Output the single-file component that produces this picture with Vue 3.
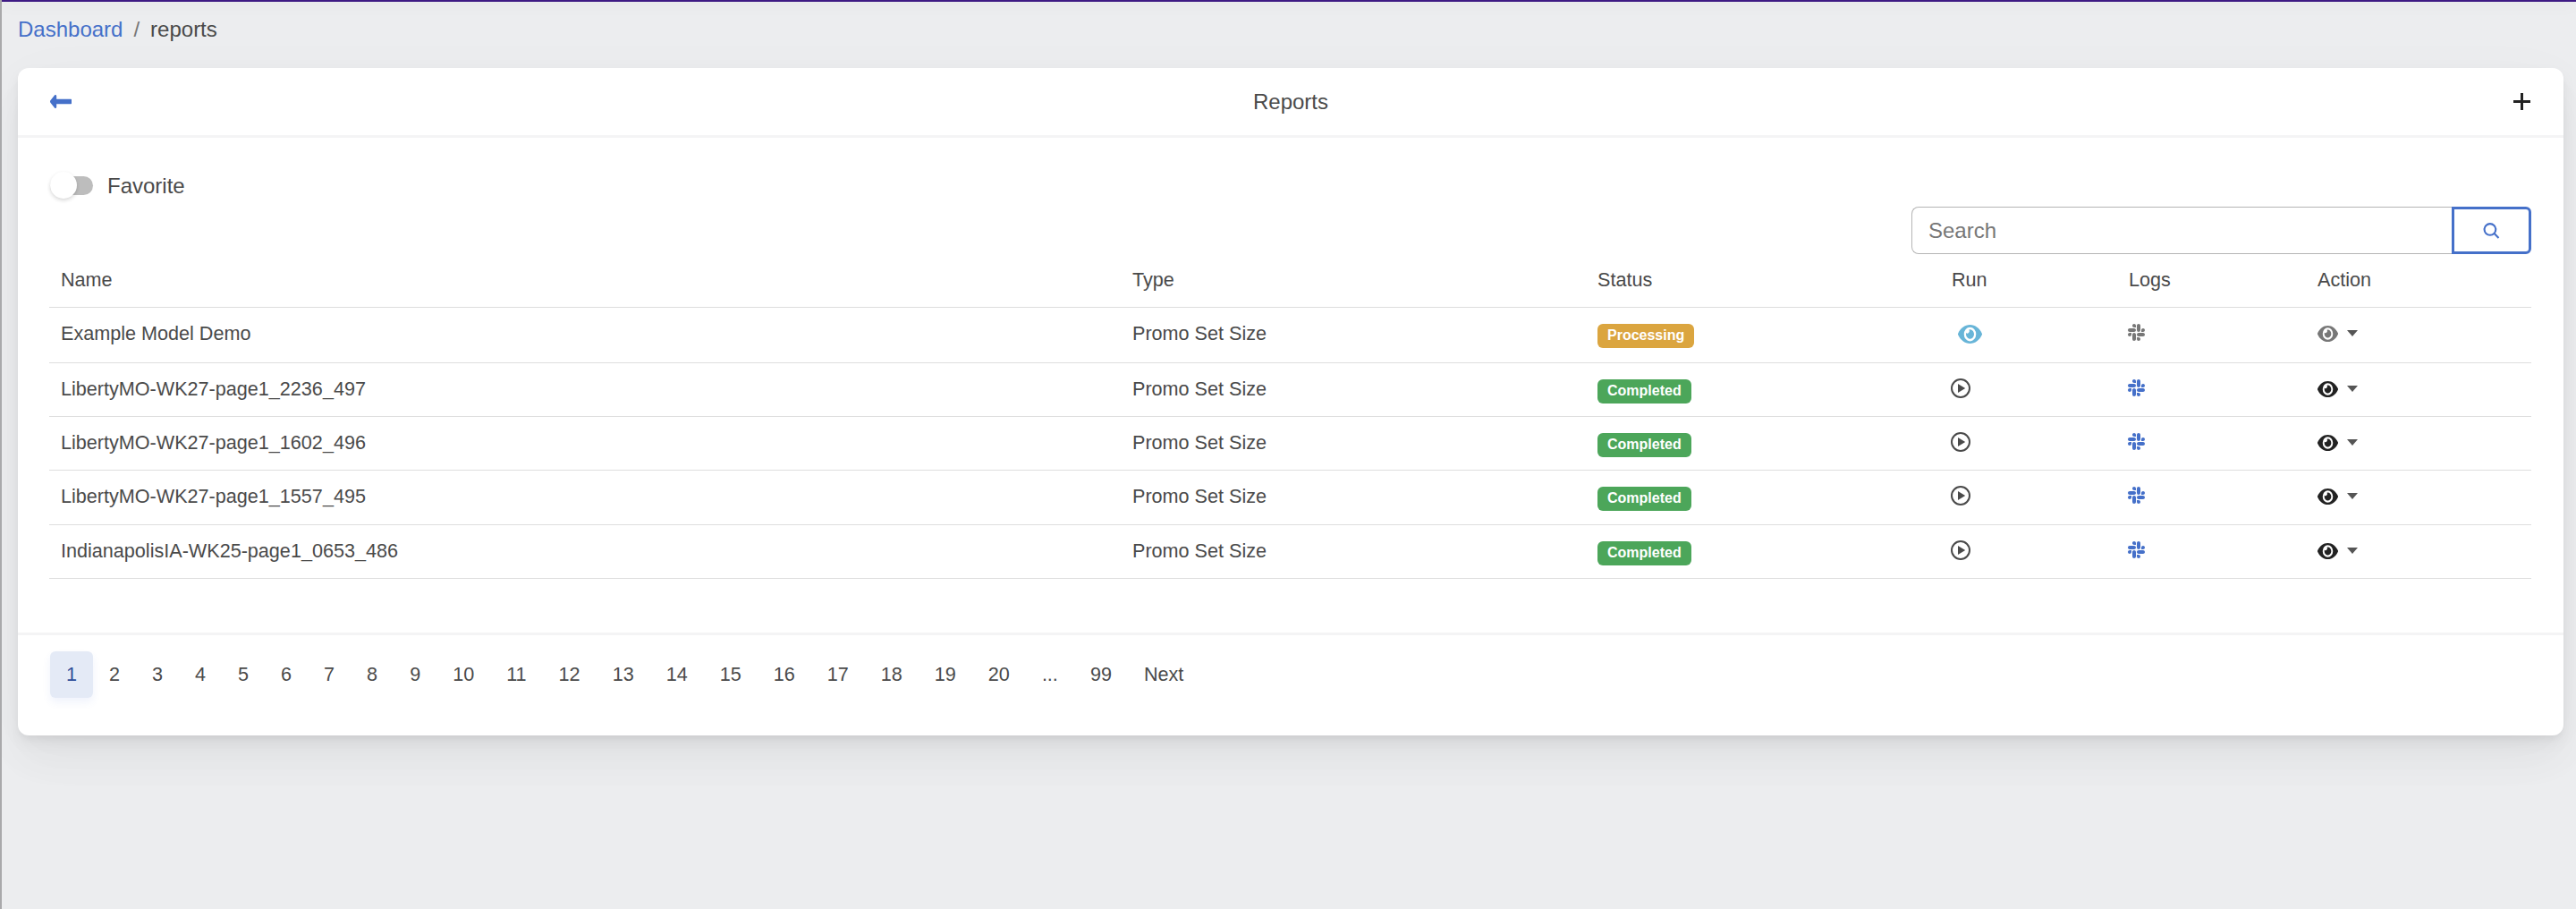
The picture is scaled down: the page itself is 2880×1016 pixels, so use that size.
<template>
  <div class="page">
    <div class="topbar"></div>

    <nav class="breadcrumb">
      <a class="crumb-link">Dashboard</a>
      <span class="crumb-sep">/</span>
      <span class="crumb-current">reports</span>
    </nav>

    <section class="card">
      <header class="card-header">
        <svg class="back-icon" viewBox="0 147 448 218" preserveAspectRatio="none">
          <path d="M134.059 296H436c6.627 0 12-5.373 12-12v-56c0-6.627-5.373-12-12-12H134.059v-46.059c0-21.382-25.851-32.09-40.971-16.971L7.029 239.029c-9.373 9.373-9.373 24.569 0 33.941l86.059 86.059c15.119 15.119 40.971 4.411 40.971-16.971V296z" />
        </svg>
        <h1 class="card-title">Reports</h1>
        <svg class="plus-icon" viewBox="0 0 19 19">
          <path d="M9.5 0v19M0 9.5h19" />
        </svg>
      </header>

      <div class="card-body">
        <div class="favorite">
          <span class="switch"><span class="knob"></span></span>
          <span class="favorite-label">Favorite</span>
        </div>

        <div class="search-row">
          <div class="search">
            <input class="search-input" type="text" placeholder="Search" />
            <button class="search-btn" type="button">
              <svg viewBox="0 0 18 17">
                <ellipse cx="7.5" cy="7" rx="6" ry="6" />
                <path d="M11.8 11.2 16.6 16" />
              </svg>
            </button>
          </div>
        </div>

        <table class="reports">
          <colgroup>
            <col style="width: 1198px" />
            <col style="width: 520px" />
            <col style="width: 396px" />
            <col style="width: 198px" />
            <col style="width: 211px" />
            <col style="width: 252px" />
          </colgroup>
          <thead>
            <tr>
              <th>Name</th>
              <th>Type</th>
              <th>Status</th>
              <th>Run</th>
              <th>Logs</th>
              <th>Action</th>
            </tr>
          </thead>
          <tbody>
            <tr v-for="row in rows" :key="row.name">
              <td>{{ row.name }}</td>
              <td>Promo Set Size</td>
              <td class="cell-status">
                <span class="badge" :class="row.processing ? 'badge-warn' : 'badge-ok'">{{ row.status }}</span>
              </td>
              <td class="cell-run">
                <svg v-if="row.processing" class="eye eye-run" viewBox="0 64 576 384" preserveAspectRatio="none">
                  <path :d="eyePath" />
                </svg>
                <svg v-else class="play" viewBox="0 0 22 22">
                  <circle cx="11" cy="11" r="10" />
                  <path d="M8 6l8.2 5L8 16z" />
                </svg>
              </td>
              <td class="cell-logs">
                <svg class="slack" :class="{ muted: row.processing }" viewBox="0 0 16 16">
                  <path :d="slackPath" />
                </svg>
              </td>
              <td>
                <div class="action" :class="{ muted: row.processing }">
                  <svg class="eye eye-action" viewBox="0 64 576 384" preserveAspectRatio="none">
                    <path :d="eyePath" />
                  </svg>
                  <span class="caret"></span>
                </div>
              </td>
            </tr>
          </tbody>
        </table>
      </div>

      <footer class="card-footer">
        <ul class="pagination">
          <li v-for="(p, i) in pages" :key="p" class="page-item" :class="{ active: i === 0 }">{{ p }}</li>
        </ul>
      </footer>
    </section>
  </div>
</template>

<script setup>
const rows = [
  { name: 'Example Model Demo', status: 'Processing', processing: true },
  { name: 'LibertyMO-WK27-page1_2236_497', status: 'Completed' },
  { name: 'LibertyMO-WK27-page1_1602_496', status: 'Completed' },
  { name: 'LibertyMO-WK27-page1_1557_495', status: 'Completed' },
  { name: 'IndianapolisIA-WK25-page1_0653_486', status: 'Completed' }
]

const pages = [...Array.from({ length: 20 }, (_, i) => i + 1), '...', 99, 'Next']

const eyePath =
  'M572.52 241.4C518.29 135.59 410.93 64 288 64S57.68 135.64 3.48 241.41a32.35 32.35 0 0 0 0 29.19C57.71 376.41 165.07 448 288 448s230.32-71.64 284.52-177.41a32.35 32.35 0 0 0 0-29.19zM288 400a144 144 0 1 1 144-144 143.93 143.93 0 0 1-144 144zm0-240a95.31 95.31 0 0 0-25.31 3.79 47.85 47.85 0 0 1-66.9 66.9A95.78 95.78 0 1 0 288 160z'

const slackPath =
  'M3.362 10.11c0 .926-.756 1.681-1.681 1.681S0 11.036 0 10.111C0 9.186.756 8.43 1.68 8.43h1.682v1.68zm.846 0c0-.924.756-1.68 1.681-1.68s1.681.756 1.681 1.68v4.21c0 .924-.756 1.68-1.68 1.68a1.685 1.685 0 0 1-1.682-1.68v-4.21zM5.89 3.362c-.926 0-1.682-.756-1.682-1.681S4.964 0 5.89 0s1.68.756 1.68 1.68v1.682H5.89zm0 .846c.924 0 1.68.756 1.68 1.681S6.814 7.57 5.89 7.57H1.68C.757 7.57 0 6.814 0 5.89c0-.926.756-1.682 1.68-1.682h4.21zm6.749 1.682c0-.926.755-1.682 1.68-1.682.925 0 1.681.756 1.681 1.681s-.756 1.681-1.68 1.681h-1.681V5.89zm-.848 0c0 .924-.755 1.68-1.68 1.68A1.685 1.685 0 0 1 8.43 5.89V1.68C8.43.757 9.186 0 10.11 0c.926 0 1.681.756 1.681 1.68v4.21zm-1.681 6.748c.926 0 1.682.756 1.682 1.681S11.036 16 10.11 16s-1.681-.756-1.681-1.68v-1.682h1.68zm0-.847c-.924 0-1.68-.755-1.68-1.68 0-.925.756-1.681 1.68-1.681h4.21c.924 0 1.68.756 1.68 1.68 0 .926-.756 1.681-1.68 1.681h-4.21z'
</script>

<style>
html,
body {
  margin: 0;
  background: #ecedef;
}
</style>

<style scoped>
.page {
  min-height: 1016px;
  box-sizing: border-box;
  border-left: 2px solid #a9a9ab;
  background: #ecedef;
  font-family: 'Liberation Sans', Arial, sans-serif;
  color: #4a4a4a;
  overflow: hidden;
}

.topbar {
  height: 2px;
  background: #3e1a84;
  box-shadow: 0 2px 18px rgba(0, 0, 0, 0.14);
}

.breadcrumb {
  display: flex;
  align-items: center;
  height: 36px;
  padding: 13px 0 0 18px;
  margin-bottom: 25px;
  font-size: 24px;
}

.crumb-link {
  color: #4570c9;
}

.crumb-sep {
  margin: 0 12px 0 12px;
  color: #777;
}

.card {
  margin: 0 14px 0 18px;
  background: #fff;
  border-radius: 12px;
  box-shadow: 0 15px 70px rgba(4, 9, 20, 0.03), 0 30px 45px rgba(4, 9, 20, 0.03),
    0 8px 17px rgba(4, 9, 20, 0.05), 0 4px 6px rgba(4, 9, 20, 0.03);
}

.card-header {
  display: flex;
  align-items: center;
  justify-content: space-between;
  height: 75px;
  padding: 0 37px 0 36px;
  border-bottom: 3px solid #f4f4f5;
}

.back-icon {
  width: 24px;
  height: 15px;
  fill: #4570c9;
}

.card-title {
  margin: 0 4px 0 0;
  font-size: 24px;
  font-weight: 400;
  color: #4a4a4a;
}

.plus-icon {
  width: 19px;
  height: 19px;
  fill: none;
  stroke: #222;
  stroke-width: 3;
}

.card-body {
  padding: 38px 36px 0 35px;
}

.favorite {
  display: flex;
  align-items: center;
  height: 30px;
  margin-left: 1px;
}

.switch {
  display: block;
  position: relative;
  width: 48px;
  height: 21px;
  border-radius: 11px;
  background: #bdbdbd;
}

.knob {
  position: absolute;
  left: 0;
  top: -5px;
  width: 30px;
  height: 30px;
  border-radius: 50%;
  background: #fff;
  box-shadow: 0 2px 4px rgba(0, 0, 0, 0.16);
}

.favorite-label {
  margin: 2px 0 0 16px;
  font-size: 24px;
}

.search-row {
  display: flex;
  justify-content: flex-end;
  margin-top: 9px;
}

.search {
  display: flex;
  width: 693px;
  height: 53px;
}

.search-input {
  flex: 1;
  min-width: 0;
  box-sizing: border-box;
  padding: 0 0 0 18px;
  border: 1px solid #b5b5b5;
  border-right: 0;
  border-radius: 8px 0 0 8px;
  outline: none;
  font-family: inherit;
  font-size: 24px;
  color: #4a4a4a;
}

.search-input::placeholder {
  color: #777;
  opacity: 1;
}

.search-btn {
  display: flex;
  align-items: center;
  justify-content: center;
  width: 89px;
  padding: 0;
  background: #fff;
  border: 3px solid #4570c9;
  border-radius: 0 6px 6px 0;
}

.search-btn svg {
  width: 19px;
  height: 18px;
  fill: none;
  stroke: #4570c9;
  stroke-width: 2;
}

.reports {
  width: 2775px;
  table-layout: fixed;
  border-collapse: separate;
  border-spacing: 0;
  font-size: 21.6px;
  line-height: 32px;
}

.reports th {
  height: 60px;
  padding: 0 13px 2px;
  box-sizing: border-box;
  font-weight: 400;
  text-align: left;
  vertical-align: middle;
  border-bottom: 1px solid #dedede;
}

.reports td {
  box-sizing: border-box;
  height: 60px;
  padding: 13px 13px 0;
  vertical-align: top;
  border-bottom: 1px solid #dedede;
}

.reports tbody tr:first-child td {
  height: 62px;
}

.reports tbody tr:nth-child(4) td {
  height: 61px;
}

.reports td.cell-status {
  padding-top: 18px;
}

.reports td.cell-run {
  padding: 17px 12px 0;
}

.reports td.cell-logs {
  padding: 18px 12px 0;
}

.badge {
  display: block;
  width: fit-content;
  height: 27px;
  padding: 0 11px;
  border-radius: 6px;
  font-size: 16px;
  font-weight: 700;
  line-height: 26px;
  color: #fff;
}

.badge-warn {
  background: #dba53f;
}

.badge-ok {
  background: #4ca65a;
}

.eye {
  display: block;
  fill: currentColor;
}

.eye-run {
  width: 27px;
  height: 21px;
  margin: 2px 0 0 8px;
  color: #68b5d8;
}

.play {
  display: block;
  width: 22px;
  height: 22px;
  fill: #4a4a4a;
}

.play circle {
  fill: none;
  stroke: #4a4a4a;
  stroke-width: 2;
}

.slack {
  display: block;
  width: 19px;
  height: 19px;
  fill: #4570c9;
}

.slack.muted {
  fill: #777;
}

.action {
  display: flex;
  align-items: flex-start;
  color: #222;
}

.action.muted {
  color: #777;
}

.eye-action {
  width: 23px;
  height: 18px;
  margin-top: 7px;
}

.caret {
  width: 0;
  height: 0;
  margin: 12px 0 0 10px;
  border-left: 6px solid transparent;
  border-right: 6px solid transparent;
  border-top: 7px solid #555;
}

.card-footer {
  margin-top: 60px;
  padding: 18px 36px 42px;
  border-top: 3px solid #f4f4f5;
}

.pagination {
  display: flex;
  margin: 0;
  padding: 0;
  list-style: none;
  font-size: 21.6px;
}

.page-item {
  height: 52px;
  padding: 0 18px;
  border-radius: 6px;
  line-height: 51px;
}

.page-item.active {
  background: #e4eaf6;
  color: #2f4f9a;
  box-shadow: 0 5px 10px rgba(63, 106, 216, 0.08);
}
</style>
